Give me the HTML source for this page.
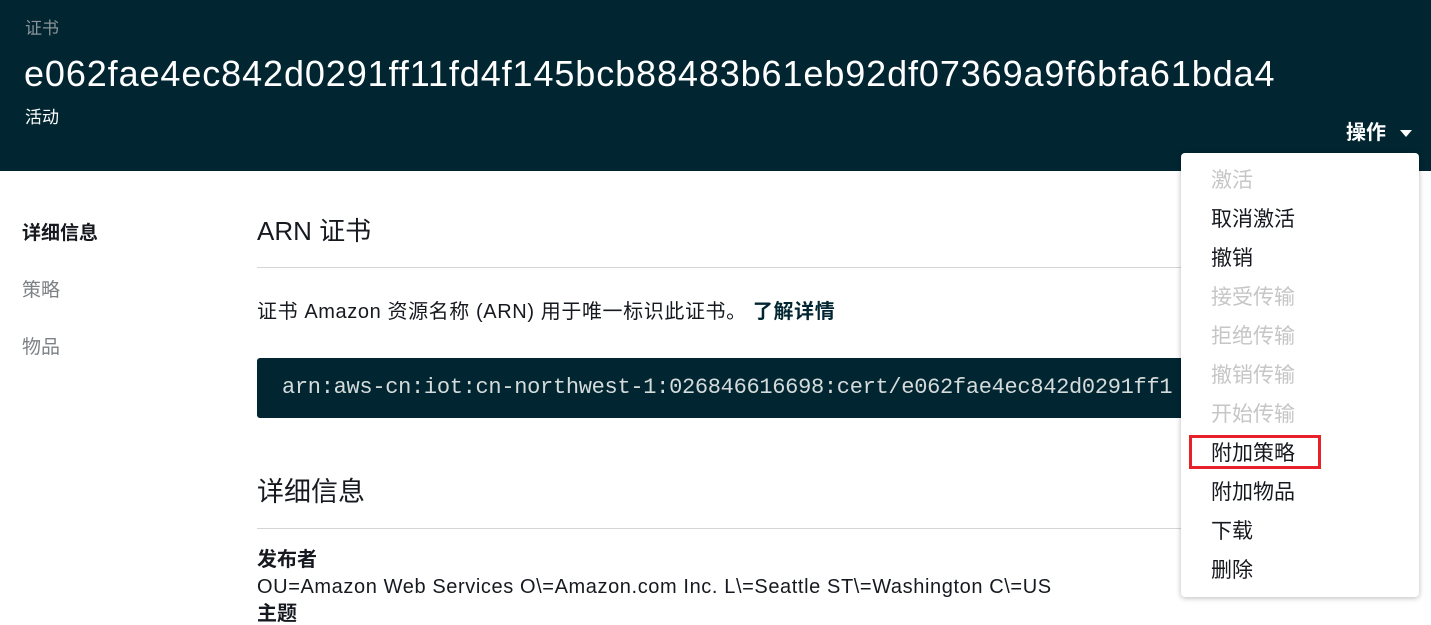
<!DOCTYPE html>
<html><head><meta charset="utf-8"><style>
*{margin:0;padding:0;box-sizing:border-box}
body{width:1431px;height:609px;overflow:hidden;background:#fff;font-family:"Liberation Sans","Noto Sans CJK SC",sans-serif;color:#16191f;position:relative}
.a{position:absolute;white-space:nowrap;line-height:1}
.hdr{position:absolute;left:0;top:0;width:1431px;height:171px;background:#012631}
.hr{position:absolute;left:257px;height:1px;background:#d5d5d5;width:1000px}
.menu{position:absolute;left:1181px;top:153px;width:238px;height:444px;background:#fff;border-radius:4px;box-shadow:0 1px 6px rgba(0,0,0,.28)}
.mi{position:absolute;left:30px;font-size:21px;line-height:1;white-space:nowrap;color:#16191f}
.dis{color:#c6c6c6}
</style></head><body>
<div class="hdr"></div>
<div class="a" style="left:25px;top:20px;font-size:17px;color:#8a9398">证书</div>
<div class="a" style="left:24px;top:56px;font-size:36px;letter-spacing:0.9px;color:#fff">e062fae4ec842d0291ff11fd4f145bcb88483b61eb92df07369a9f6bfa61bda4</div>
<div class="a" style="left:25px;top:109px;font-size:17px;color:#fff">活动</div>
<div class="a" style="left:1346px;top:123px;font-size:20px;color:#fff;font-weight:bold">操作</div>
<svg style="position:absolute;left:1400px;top:130px" width="12" height="7"><path d="M0 0H12L6 7Z" fill="#fff"/></svg>

<div class="a" style="left:22px;top:224px;font-size:19px;font-weight:bold">详细信息</div>
<div class="a" style="left:22px;top:281px;font-size:19px;color:#7d8185">策略</div>
<div class="a" style="left:22px;top:338px;font-size:19px;color:#7d8185">物品</div>

<div class="a" style="left:257px;top:218px;font-size:26px">ARN 证书</div>
<div class="hr" style="top:267px"></div>
<div class="a" style="left:257px;top:302px;font-size:20px;letter-spacing:0.6px">证书 Amazon 资源名称 (ARN) 用于唯一标识此证书。 <b style="color:#012631">了解详情</b></div>
<div style="position:absolute;left:257px;top:358px;width:1000px;height:60px;background:#012631;border-radius:3px"></div>
<div class="a" style="left:282px;top:377px;font-size:22px;color:#d5dbdb;font-family:'Liberation Mono',monospace;letter-spacing:-0.3px">arn:aws-cn:iot:cn-northwest-1:026846616698:cert/e062fae4ec842d0291ff1</div>
<div class="a" style="left:257px;top:479px;font-size:27px">详细信息</div>
<div class="hr" style="top:528px"></div>
<div class="a" style="left:257px;top:550px;font-size:20px;font-weight:bold">发布者</div>
<div class="a" style="left:257px;top:577px;font-size:20px;letter-spacing:0.6px">OU=Amazon Web Services O\=Amazon.com Inc. L\=Seattle ST\=Washington C\=US</div>
<div class="a" style="left:257px;top:604px;font-size:20px;font-weight:bold">主题</div>

<div class="menu">
<div class="mi dis" style="top:17px">激活</div>
<div class="mi" style="top:56px">取消激活</div>
<div class="mi" style="top:95px">撤销</div>
<div class="mi dis" style="top:134px">接受传输</div>
<div class="mi dis" style="top:173px">拒绝传输</div>
<div class="mi dis" style="top:212px">撤销传输</div>
<div class="mi dis" style="top:251px">开始传输</div>
<div style="position:absolute;left:8px;top:282px;width:132px;height:34px;border:3px solid #e8202a"></div>
<div class="mi" style="top:290px">附加策略</div>
<div class="mi" style="top:329px">附加物品</div>
<div class="mi" style="top:368px">下载</div>
<div class="mi" style="top:407px">删除</div>
</div>
</body></html>
